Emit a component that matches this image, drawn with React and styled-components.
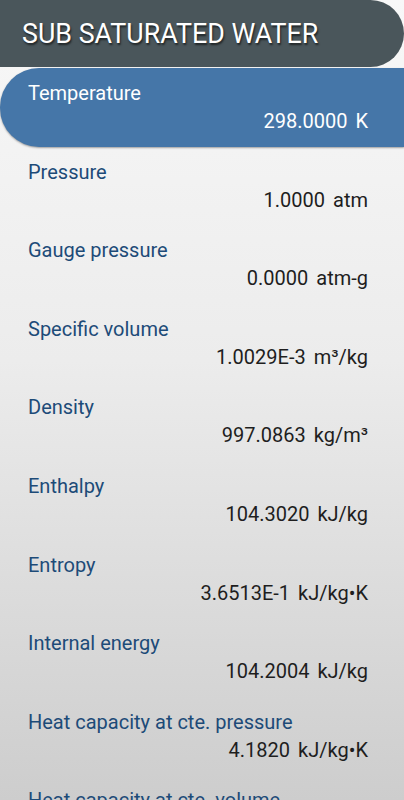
import React from 'react'
import styled, { createGlobalStyle } from 'styled-components'

const GlobalStyle = createGlobalStyle`
    html, body {
        margin: 0;
        padding: 0;
        overflow: hidden;
    }
    body {
        font-family: Roboto, "Liberation Sans", sans-serif;
    }
`;

const Screen = styled.div`
    width: 404px;
    height: 800px;
    overflow: hidden;
    background: linear-gradient(to bottom, #f8f8f8 0%, #ececec 45%, #cdcdcd 100%);
`;

const Header = styled.div`
    height: 67px;
    box-sizing: border-box;
    padding-left: 22px;
    display: flex;
    align-items: center;
    background: #4a565b;
    border-radius: 0 34px 34px 0;
`;

const Title = styled.h1`
    margin: 0;
    color: #fff;
    font-size: 26.8px;
    font-weight: 400;
    text-shadow: 1px 2px 2px rgba(0, 0, 0, 0.6);
`;

const Row = styled.div`
    height: 78.6px;
    box-sizing: border-box;
    padding: 13px 36px 0 28px;
    display: flex;
    flex-direction: column;
    background: ${p => (p.$active ? '#4576a8' : 'transparent')};
    border-radius: ${p => (p.$active ? '39px 0 0 39px' : '0')};
    box-shadow: ${p => (p.$active ? '0 1px 2px rgba(0,0,0,0.35)' : 'none')};
    margin-top: ${p => (p.$active ? '1px' : '0')};
`;

const Label = styled.div`
    font-size: 20px;
    line-height: 24px;
    color: ${p => (p.$active ? '#fff' : '#1d4b78')};
`;

const Value = styled.div`
    margin-top: 4px;
    align-self: flex-end;
    display: flex;
    gap: 8px;
    font-size: 20px;
    line-height: 24px;
    color: ${p => (p.$active ? '#fff' : '#1e1e1e')};
`;

const rows = [
    ['Temperature', '298.0000', 'K'],
    ['Pressure', '1.0000', 'atm'],
    ['Gauge pressure', '0.0000', 'atm-g'],
    ['Specific volume', '1.0029E-3', 'm³/kg'],
    ['Density', '997.0863', 'kg/m³'],
    ['Enthalpy', '104.3020', 'kJ/kg'],
    ['Entropy', '3.6513E-1', 'kJ/kg•K'],
    ['Internal energy', '104.2004', 'kJ/kg'],
    ['Heat capacity at cte. pressure', '4.1820', 'kJ/kg•K'],
    ['Heat capacity at cte. volume', '4.1375', 'kJ/kg•K'],
];

export default function App() {
    return (
        <>
            <GlobalStyle />
            <Screen>
                <Header>
                    <Title>SUB SATURATED WATER</Title>
                </Header>
                {rows.map(([label, num, unit], i) => (
                    <Row key={label} $active={i === 0}>
                        <Label $active={i === 0}>{label}</Label>
                        <Value $active={i === 0}>
                            <span>{num}</span>
                            <span>{unit}</span>
                        </Value>
                    </Row>
                ))}
            </Screen>
        </>
    )
}
